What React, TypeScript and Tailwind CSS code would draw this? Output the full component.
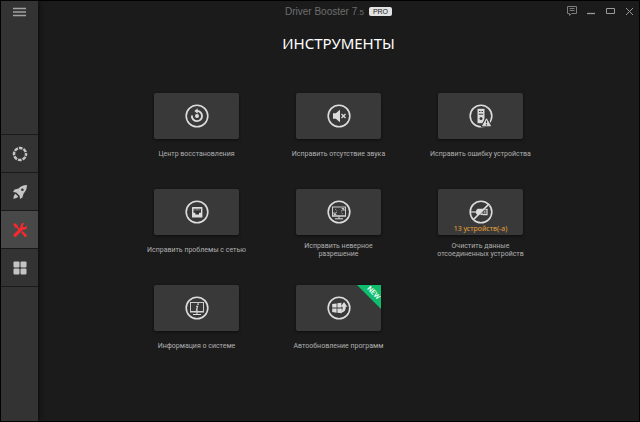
import { useState } from "react";
import type { ReactNode } from "react";

type Tool = {
  label: string;
  icon: ReactNode;
  note?: string;
  isNew?: boolean;
};

const Ring = ({ children }: { children: ReactNode }) => (
  <svg viewBox="0 0 24 24" className="w-6 h-6" fill="none" stroke="currentColor">
    <circle cx="12" cy="12" r="10.8" strokeWidth="1.6" />
    {children}
  </svg>
);

const RestoreIcon = () => (
  <Ring>
    <path d="M6.9 11.5a5.1 5.1 0 1 0 5.3-4.6h-.6" strokeWidth="1.9" />
    <path d="M12.6 4.2v5.6L9.4 6.9z" fill="currentColor" stroke="none" />
    <circle cx="12" cy="12" r="2" fill="currentColor" stroke="none" />
  </Ring>
);

const SoundIcon = () => (
  <Ring>
    <path d="M6 9.2h2.8L13 5.8v12.4l-4.2-3.4H6z" fill="currentColor" stroke="none" />
    <path d="M14.5 10l4 4m0-4l-4 4" strokeWidth="1.4" />
  </Ring>
);

const DeviceErrorIcon = () => (
  <Ring>
    <path d="M8.5 4.8h7v14.4h-7z" fill="currentColor" stroke="none" />
    <path d="M10 7.5h1.5m1 0H14M9.8 10.2h4.4" stroke="#393939" />
    <circle cx="12" cy="14.4" r="1.5" fill="#393939" stroke="none" />
    <path d="M17.5 14.5l4.3 7.6h-8.6z" fill="currentColor" stroke="#393939" strokeWidth="2.8" strokeLinejoin="round" />
    <path d="M17.5 14.8l4 7h-8z" fill="currentColor" strokeLinejoin="round" />
    <path d="M17.5 16.5v2.8m0 1v1.2" stroke="#393939" strokeWidth="1.2" />
  </Ring>
);

const NetworkIcon = () => (
  <Ring>
    <rect x="7" y="7" width="10.4" height="10.4" rx="0.5" fill="currentColor" stroke="none" />
    <path d="M8.5 8.8h7.4v4H14v1.6h-3.6v-1.6H8.5z" fill="#303030" stroke="none" />
    <path d="M9.8 9.2v1.4m1.5-1.4v1.4m1.4-1.4v1.4m1.5-1.4v1.4" strokeWidth="0.6" />
  </Ring>
);

const ResolutionIcon = () => (
  <Ring>
    <rect x="5.5" y="7" width="13" height="9" strokeWidth="0.9" />
    <path d="M5 16h14M12 16.5v2M8 18.8h8" />
    <path d="M14.6 8.6H17V11m0-2.4l-2.8 2.6M9.4 14.6H7v-2.4m0 2.4L9.8 12" strokeWidth="0.9" />
    <path d="M8.2 9.2l1.4 1.2m4.8 2.4l1.4 1.2" strokeWidth="0.6" />
  </Ring>
);

const UnpluggedIcon = () => (
  <Ring>
    <path d="M1.5 12H7" strokeWidth="1.2" />
    <path d="M7 10.5l1.6-1.7h5V15h-5L7 13.4z" fill="currentColor" stroke="none" />
    <path d="M13.5 9.3H18v5.4h-4.5" strokeWidth="1.2" />
    <path d="M14.6 11.1h2M14.6 12.9h2" />
    <path d="M20.2 5.2l-15 15" stroke="#393939" />
    <path d="M19.6 4.4L4.4 19.6" strokeWidth="1.5" />
  </Ring>
);

const InfoIcon = () => (
  <Ring>
    <rect x="5.5" y="6.5" width="13" height="9" strokeWidth="0.9" />
    <path d="M5 16h14M12 16v2M8 18.5h8" />
    <path d="M13.3 7.4l-.4 1.5" strokeWidth="1.5" />
    <path d="M11.2 10.3h1.3l-1 3.9h1.3" strokeWidth="1.2" />
  </Ring>
);

const UpdateIcon = () => (
  <Ring>
    <path
      d="M5.2 8.1l4.4-.7v4.2H5.2zM5.2 12.4h4.4v4.3L5.2 16zM10.4 7.3l4-.6v4.9h-4zM10.4 12.4h4.4v4.9l-4.4-.6z"
      fill="currentColor"
      stroke="none"
    />
    <path
      d="M14.4 16.8c3.6-1 4.5-3.2 4.3-6h1.7L17 6l-3.2 4.8h1.8c.1 2-.1 3.6-1.4 4.6z"
      fill="currentColor"
      stroke="none"
    />
  </Ring>
);

const tools: Tool[] = [
  { label: "Центр восстановления", icon: <RestoreIcon /> },
  { label: "Исправить отсутствие звука", icon: <SoundIcon /> },
  { label: "Исправить ошибку устройства", icon: <DeviceErrorIcon /> },
  { label: "Исправить проблемы с сетью", icon: <NetworkIcon /> },
  { label: "Исправить неверное разрешение", icon: <ResolutionIcon /> },
  {
    label: "Очистить данные отсоединенных устройств",
    icon: <UnpluggedIcon />,
    note: "13 устройств(-а)",
  },
  { label: "Информация о системе", icon: <InfoIcon /> },
  { label: "Автообновление программ", icon: <UpdateIcon />, isNew: true },
];

const navItems = [
  {
    id: "scan",
    icon: (
      <circle
        cx="8"
        cy="8"
        r="6"
        fill="none"
        stroke="currentColor"
        strokeWidth="2.5"
        strokeDasharray="3.7 1.012"
        strokeDashoffset="1.85"
      />
    ),
  },
  {
    id: "boost",
    icon: (
      <>
        <path
          fillRule="evenodd"
          d="M15 1c-4 .2-6.4 1.2-8.4 3.4l-4 1.2L1 8l3.2.4 3.4 3.4.4 3.2 2.4-1.6 1.2-4C13.8 7.4 14.8 5 15 1zM10.4 4.4a1.3 1.3 0 1 1 0 2.6 1.3 1.3 0 0 1 0-2.6z"
        />
        <path d="M3.4 9.8l2.8 2.8c-.8 1.4-2.6 2-4.8 2.2.2-2.2.6-4 2-5z" />
      </>
    ),
  },
  {
    id: "tools",
    icon: (
      <>
        <path d="M12.6 1.2l-1.8 2 .2 1.8 1.8.2 2-1.8c.6 1.8 0 3.6-1.6 4.2-.8.3-1.5.2-2.2 0l-6.8 7c-1.6 1.2-3.6-.8-2.4-2.4l6.8-6.8c-.8-2.2 1.4-5 4-4.2z" />
        <path d="M1.2 2l1.4-1 3 2.2.2 1.6 2 2L6.600 8l-2-2L3 5.600zM9.2 10.4L10.600 9l4 3.800c1 1.200-.8 3-2 2z" />
      </>
    ),
  },
  {
    id: "apps",
    icon: (
      <>
        <rect x="1.5" y="1.5" width="6" height="6" rx="1" />
        <rect x="8.5" y="1.5" width="6" height="6" rx="1" />
        <rect x="1.5" y="8.5" width="6" height="6" rx="1" />
        <rect x="8.5" y="8.5" width="6" height="6" rx="1" />
      </>
    ),
  },
];

const Sidebar = () => {
  const [active, setActive] = useState("tools");

  return (
    <div className="w-[37px] shrink-0 bg-[#333333] text-[#c4c4c4] shadow-[1px_0_4px_#0c0c0c]">
      <div className="h-[133px] pt-[6px]">
        <button className="flex w-full justify-center" aria-label="menu">
          <svg viewBox="0 0 14 10" className="w-[14px] h-[10px]" stroke="#a2a2a2" strokeWidth="1.3">
            <path d="M0 1.5h13M0 5h13M0 8.5h13" />
          </svg>
        </button>
      </div>
      <nav className="border-b border-[#1a1a1a]">
        {navItems.map((item) => (
          <button
            key={item.id}
            aria-label={item.id}
            onClick={() => setActive(item.id)}
            className={`flex w-full h-[38px] items-center justify-center border-t border-[#1a1a1a] ${
              active === item.id ? "bg-[#484848] text-[#f62a2e]" : ""
            }`}
          >
            <svg viewBox="0 0 16 16" className="w-4 h-4" fill="currentColor">
              {item.icon}
            </svg>
          </button>
        ))}
      </nav>
    </div>
  );
};

const TitleBar = () => (
  <div className="relative flex h-5 items-center justify-center">
    <div className="font-['Liberation_Sans'] text-[10px] text-[#6e6e6e]">
      Driver Booster 7<span className="text-[8px]">.5</span>
    </div>
    <div className="ml-[5px] rounded-[2px] bg-[#e2e2e2] px-1 font-['Liberation_Sans'] text-[7px] leading-[9px] text-[#222222]">
      PRO
    </div>
    <div className="absolute right-[5px] top-[5px] flex gap-[9px] text-[#9a9a9a]">
      <button aria-label="feedback">
        <svg viewBox="0 0 10 10" className="w-[10px] h-[10px]" fill="none" stroke="#7c7c7c">
          <path d="M.5.5h9v7h-5l-2 2v-2h-2zM2.5 2.5h5M2.5 4.5h5" />
        </svg>
      </button>
      <button aria-label="minimize">
        <svg viewBox="0 0 10 10" className="w-[10px] h-[10px]" stroke="currentColor">
          <path d="M1 7.5h8" strokeWidth="1.3" />
        </svg>
      </button>
      <button aria-label="maximize">
        <svg viewBox="0 0 10 10" className="w-[10px] h-[10px]" fill="none" stroke="currentColor">
          <path d="M1.5 2.5h8v5h-8z" />
        </svg>
      </button>
      <button aria-label="close">
        <svg viewBox="0 0 10 10" className="w-[10px] h-[10px]" stroke="currentColor">
          <path d="M2 2l7 7M9 2L2 9" />
        </svg>
      </button>
    </div>
  </div>
);

const ToolCard = ({ tool }: { tool: Tool }) => (
  <button className="flex h-24 flex-col items-center">
    <div className="relative flex w-[85px] h-[46px] items-center justify-center rounded-[2px] bg-[#393939] text-[#dcdcdc] shadow-[0_1px_3px_#0e0e0e]">
      {tool.icon}
      {tool.note && (
        <div className="absolute inset-x-0 bottom-[2px] text-[7px] leading-[8px] text-[#e6a035]">
          {tool.note}
        </div>
      )}
      {tool.isNew && (
        <>
          <div className="absolute right-0 top-0 w-6 h-6 bg-[#0fbd6c] [clip-path:polygon(0_0,100%_0,100%_100%)]" />
          <div className="absolute right-0 top-1 rotate-45 font-['Roboto'] text-[7px] font-medium leading-[8px] text-white">
            NEW
          </div>
        </>
      )}
    </div>
    <div className="mt-[5px] flex h-5 w-[106px] items-center justify-center font-['Roboto'] text-[7px] leading-[8px] text-[#b0b0b0]">
      {tool.label}
    </div>
  </button>
);

export default function App() {
  return (
    <div className="flex min-h-screen border border-black bg-[#1b1b1b] font-['Noto_Sans',sans-serif]">
      <Sidebar />
      <main className="flex-1">
        <TitleBar />
        <h1 className="mt-3 text-center text-[15px] leading-5 text-white">ИНСТРУМЕНТЫ</h1>
        <div className="mx-auto mt-10 grid max-w-[426px] grid-cols-3">
          {tools.map((tool) => (
            <ToolCard key={tool.label} tool={tool} />
          ))}
        </div>
      </main>
    </div>
  );
}
